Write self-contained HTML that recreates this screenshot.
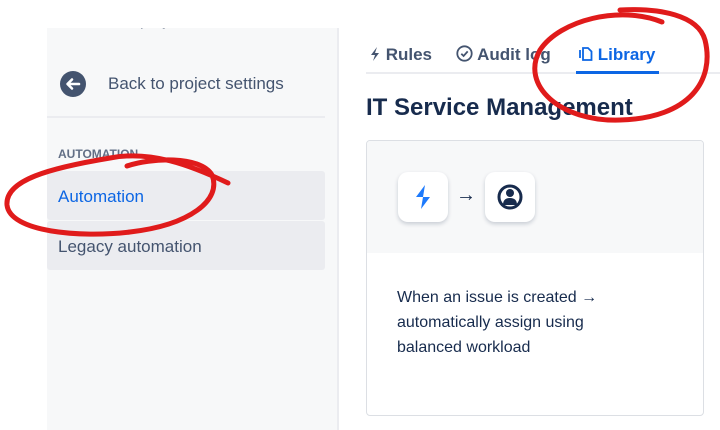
<!DOCTYPE html>
<html><head><style>
body{margin:0;width:720px;height:430px;background:#fff;font-family:"Liberation Sans",sans-serif;position:relative;overflow:hidden}
.side{position:absolute;left:47px;top:28px;width:290px;height:402px;background:#f7f8f9;border-right:2px solid #ebecf0}
.abs{position:absolute}
</style></head><body>
<div class="side"></div>
<div class="abs" style="left:140px;top:12px;font-size:16px;color:#44546f">project</div>
<div class="abs" style="left:47px;top:0;width:292px;height:28px;background:#fff"></div>
<div class="abs" style="left:60px;top:71px;width:26px;height:26px;border-radius:50%;background:#44546f"><svg width="26" height="26"><path d="M19 13 H8 M12 8.5 L7.5 13 L12 17.5" fill="none" stroke="#fff" stroke-width="2.6" stroke-linecap="round" stroke-linejoin="round"/></svg></div>
<div class="abs" style="left:108px;top:74px;font-size:17px;color:#44546f">Back to project settings</div>
<div class="abs" style="left:47px;top:116px;width:278px;height:2px;background:#ebecf0"></div>
<div class="abs" style="left:58px;top:147px;font-size:12px;font-weight:bold;color:#626f86">AUTOMATION</div>
<div class="abs" style="left:47px;top:171px;width:278px;height:49px;background:#ebecf0;border-radius:3px"></div>
<div class="abs" style="left:47px;top:221px;width:278px;height:49px;background:#ebecf0;border-radius:3px"></div>
<div class="abs" style="left:58px;top:187px;font-size:17px;color:#0c66e4">Automation</div>
<div class="abs" style="left:58px;top:237px;font-size:17px;color:#44546f">Legacy automation</div>

<div class="abs" style="left:366px;top:72px;width:354px;height:2px;background:#ebecf0"></div>
<div class="abs" style="left:576px;top:71px;width:83px;height:3px;background:#0c66e4"></div>
<div class="abs" style="left:369px;top:45px;font-size:17px;font-weight:bold;color:#44546f"><svg width="12" height="14" style="vertical-align:-1px"><path d="M8 0 L2 8 H6 L4 14 L10 6 H6 Z" fill="#44546f"/></svg> Rules</div>
<div class="abs" style="left:456px;top:45px;font-size:17px;font-weight:bold;color:#44546f"><svg width="17" height="17" style="vertical-align:-2px"><circle cx="8.5" cy="8.5" r="7.2" fill="none" stroke="#44546f" stroke-width="1.8"/><path d="M5.3 8.7 L7.6 11 L11.7 6.4" fill="none" stroke="#44546f" stroke-width="1.8"/></svg> Audit log</div>
<div class="abs" style="left:578px;top:45px;font-size:17px;font-weight:bold;color:#0c66e4"><svg width="15" height="17" style="vertical-align:-2px"><path d="M5 3 H10 L13.5 6.5 V15 H5 Z" fill="none" stroke="#0c66e4" stroke-width="1.8"/><path d="M2 5 V13" stroke="#0c66e4" stroke-width="1.8"/></svg> Library</div>
<div class="abs" style="left:366px;top:94px;font-size:24px;font-weight:bold;color:#172b4d">IT Service Management</div>

<div class="abs" style="left:366px;top:140px;width:336px;height:274px;border:1px solid #dcdfe4;border-radius:4px;background:#fff;overflow:hidden">
<div style="height:112px;background:#f7f8f9"></div>
</div>
<div class="abs" style="left:398px;top:172px;width:50px;height:50px;background:#fff;border-radius:10px;box-shadow:0 2px 4px rgba(9,30,66,.2)"><svg width="50" height="50"><path d="M27 13 L18 25 L25 25 Z M25 25 L32 25 L23 37 Z" fill="#1d7afc"/></svg></div>
<div class="abs" style="left:456px;top:184px;font-size:20px;color:#172b4d">→</div>
<div class="abs" style="left:485px;top:172px;width:50px;height:50px;background:#fff;border-radius:10px;box-shadow:0 2px 4px rgba(9,30,66,.2)"><svg width="50" height="50"><circle cx="25" cy="25" r="11" fill="none" stroke="#172b4d" stroke-width="3"/><circle cx="25" cy="21" r="4" fill="#172b4d"/><path d="M18 33 Q18 26 25 26 Q32 26 32 33 Z" fill="#172b4d"/></svg></div>
<div class="abs" style="left:397px;top:285px;font-size:16px;line-height:25px;color:#172b4d;width:222px">When an issue is created → automatically assign using balanced workload</div>

<svg class="abs" style="left:0;top:0" width="720" height="430">
<g fill="none" stroke="#e01b1b" stroke-width="5" stroke-linecap="round">
<path d="M228 183 C190 165 150 150 110 158 C50 168 5 180 7 205 C10 232 80 238 130 232 C190 225 222 200 212 175 C200 155 150 158 127 166"/>
<path d="M662 22 C620 5 560 20 540 50 C520 85 560 122 620 120 C690 118 715 80 705 40 C698 15 660 8 620 10"/>
</g></svg>
</body></html>
